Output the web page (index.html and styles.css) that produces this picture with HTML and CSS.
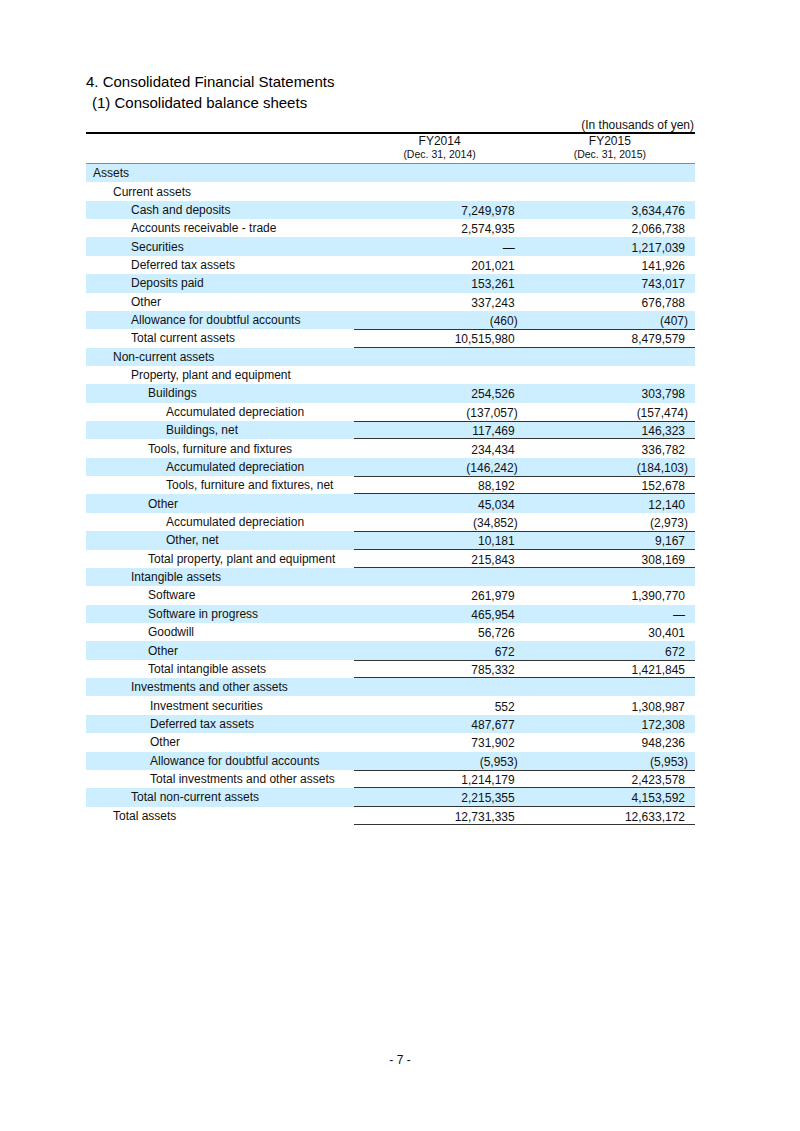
FILE: index.html
```html
<!DOCTYPE html>
<html lang="en">
<head>
    <meta charset="UTF-8">
    <meta name="viewport" content="width=device-width, initial-scale=1.0">
    <title>Consolidated balance sheets</title>
    <link rel="stylesheet" href="styles.css">
</head>
<body>
    <div class="page">
        <div class="titles">
            <h1>4. Consolidated Financial Statements</h1>
            <h2>(1) Consolidated balance sheets</h2>
        </div>

        <div class="unit">(In thousands of yen)</div>
        <table class="sheet">
            <colgroup>
                <col class="c-label">
                <col class="c-num">
                <col class="c-num">
            </colgroup>
            <thead>
                <tr>
                    <th></th>
                    <th><span class="fy">FY2014</span><span class="asof">(Dec. 31, 2014)</span></th>
                    <th><span class="fy">FY2015</span><span class="asof">(Dec. 31, 2015)</span></th>
                </tr>
            </thead>
            <tbody>
                <tr><td class="l0">Assets</td><td class="num"></td><td class="num"></td></tr>
                <tr><td class="l1">Current assets</td><td class="num"></td><td class="num"></td></tr>
                <tr><td class="l2">Cash and deposits</td><td class="num">7,249,978</td><td class="num">3,634,476</td></tr>
                <tr><td class="l2">Accounts receivable - trade</td><td class="num">2,574,935</td><td class="num">2,066,738</td></tr>
                <tr><td class="l2">Securities</td><td class="num">—</td><td class="num">1,217,039</td></tr>
                <tr><td class="l2">Deferred tax assets</td><td class="num">201,021</td><td class="num">141,926</td></tr>
                <tr><td class="l2">Deposits paid</td><td class="num">153,261</td><td class="num">743,017</td></tr>
                <tr><td class="l2">Other</td><td class="num">337,243</td><td class="num">676,788</td></tr>
                <tr><td class="l2">Allowance for doubtful accounts</td><td class="num">(460<span class="rp">)</span></td><td class="num">(407<span class="rp">)</span></td></tr>
                <tr class="total"><td class="l2">Total current assets</td><td class="num">10,515,980</td><td class="num">8,479,579</td></tr>
                <tr><td class="l1">Non-current assets</td><td class="num"></td><td class="num"></td></tr>
                <tr><td class="l2">Property, plant and equipment</td><td class="num"></td><td class="num"></td></tr>
                <tr><td class="l3">Buildings</td><td class="num">254,526</td><td class="num">303,798</td></tr>
                <tr><td class="l4">Accumulated depreciation</td><td class="num">(137,057<span class="rp">)</span></td><td class="num">(157,474<span class="rp">)</span></td></tr>
                <tr class="total"><td class="l4">Buildings, net</td><td class="num">117,469</td><td class="num">146,323</td></tr>
                <tr><td class="l3">Tools, furniture and fixtures</td><td class="num">234,434</td><td class="num">336,782</td></tr>
                <tr><td class="l4">Accumulated depreciation</td><td class="num">(146,242<span class="rp">)</span></td><td class="num">(184,103<span class="rp">)</span></td></tr>
                <tr class="total"><td class="l4">Tools, furniture and fixtures, net</td><td class="num">88,192</td><td class="num">152,678</td></tr>
                <tr><td class="l3">Other</td><td class="num">45,034</td><td class="num">12,140</td></tr>
                <tr><td class="l4">Accumulated depreciation</td><td class="num">(34,852<span class="rp">)</span></td><td class="num">(2,973<span class="rp">)</span></td></tr>
                <tr class="total"><td class="l4">Other, net</td><td class="num">10,181</td><td class="num">9,167</td></tr>
                <tr class="total"><td class="l3">Total property, plant and equipment</td><td class="num">215,843</td><td class="num">308,169</td></tr>
                <tr><td class="l2">Intangible assets</td><td class="num"></td><td class="num"></td></tr>
                <tr><td class="l3">Software</td><td class="num">261,979</td><td class="num">1,390,770</td></tr>
                <tr><td class="l3">Software in progress</td><td class="num">465,954</td><td class="num">—</td></tr>
                <tr><td class="l3">Goodwill</td><td class="num">56,726</td><td class="num">30,401</td></tr>
                <tr><td class="l3">Other</td><td class="num">672</td><td class="num">672</td></tr>
                <tr class="total"><td class="l3">Total intangible assets</td><td class="num">785,332</td><td class="num">1,421,845</td></tr>
                <tr><td class="l2">Investments and other assets</td><td class="num"></td><td class="num"></td></tr>
                <tr><td class="l3b">Investment securities</td><td class="num">552</td><td class="num">1,308,987</td></tr>
                <tr><td class="l3b">Deferred tax assets</td><td class="num">487,677</td><td class="num">172,308</td></tr>
                <tr><td class="l3b">Other</td><td class="num">731,902</td><td class="num">948,236</td></tr>
                <tr><td class="l3b">Allowance for doubtful accounts</td><td class="num">(5,953<span class="rp">)</span></td><td class="num">(5,953<span class="rp">)</span></td></tr>
                <tr class="total"><td class="l3b">Total investments and other assets</td><td class="num">1,214,179</td><td class="num">2,423,578</td></tr>
                <tr class="total"><td class="l2">Total non-current assets</td><td class="num">2,215,355</td><td class="num">4,153,592</td></tr>
                <tr class="total"><td class="l1">Total assets</td><td class="num">12,731,335</td><td class="num">12,633,172</td></tr>
            </tbody>
        </table>

        <div class="folio">- 7 -</div>
    </div>
</body>
</html>
```

FILE: styles.css
```css
body { margin: 0; background-color: #fff; color: #111; font-family: "Liberation Sans", Arial, sans-serif; }
.page { min-height: 1131px; box-sizing: border-box; display: flex; flex-direction: column; padding: 71px 0 64px 86px; }

/* titres */
.titles h1, .titles h2 { margin: 0; font-size: 15px; font-weight: normal; line-height: 21px; color: #000; }
.titles h2 { padding-left: 6px; }

.unit { width: 608px; margin-top: 5px; text-align: right; font-size: 12px; line-height: 14px; }

/* tableau */
.sheet { width: 609px; table-layout: fixed; border-collapse: separate; border-spacing: 0; border-top: 2px solid #000; font-size: 12px; }
.c-label { width: 268px; }
.c-num { width: 170px; }
.sheet th { padding: 0 0 2px; font-weight: normal; text-align: center; border-bottom: 1px solid #8a8a8a; }
.fy { display: block; line-height: 14px; }
.asof { display: block; font-size: 10.5px; line-height: 13px; }
.sheet tbody tr { height: 18.37px; }
.sheet td { box-sizing: border-box; padding: 0; line-height: 14px; white-space: nowrap; vertical-align: middle; }
.sheet tbody tr:nth-child(odd) td { background-color: #cceeff; }
.num { text-align: right; padding: 2px 10px 0 0 !important; }
.rp { margin-right: -3px; }

.l0 { padding-left: 7px !important; }
.l1 { padding-left: 27px !important; }
.l2 { padding-left: 45px !important; }
.l3 { padding-left: 62px !important; }
.l3b { padding-left: 64px !important; }
.l4 { padding-left: 80px !important; }

.total td.num { box-shadow: inset 0 1px #333, inset 0 -1px #333; }
.total + .total td.num { box-shadow: inset 0 -1px #333; }

.folio { margin-top: auto; width: 628px; text-align: center; font-size: 12px; line-height: 14px; }
```
